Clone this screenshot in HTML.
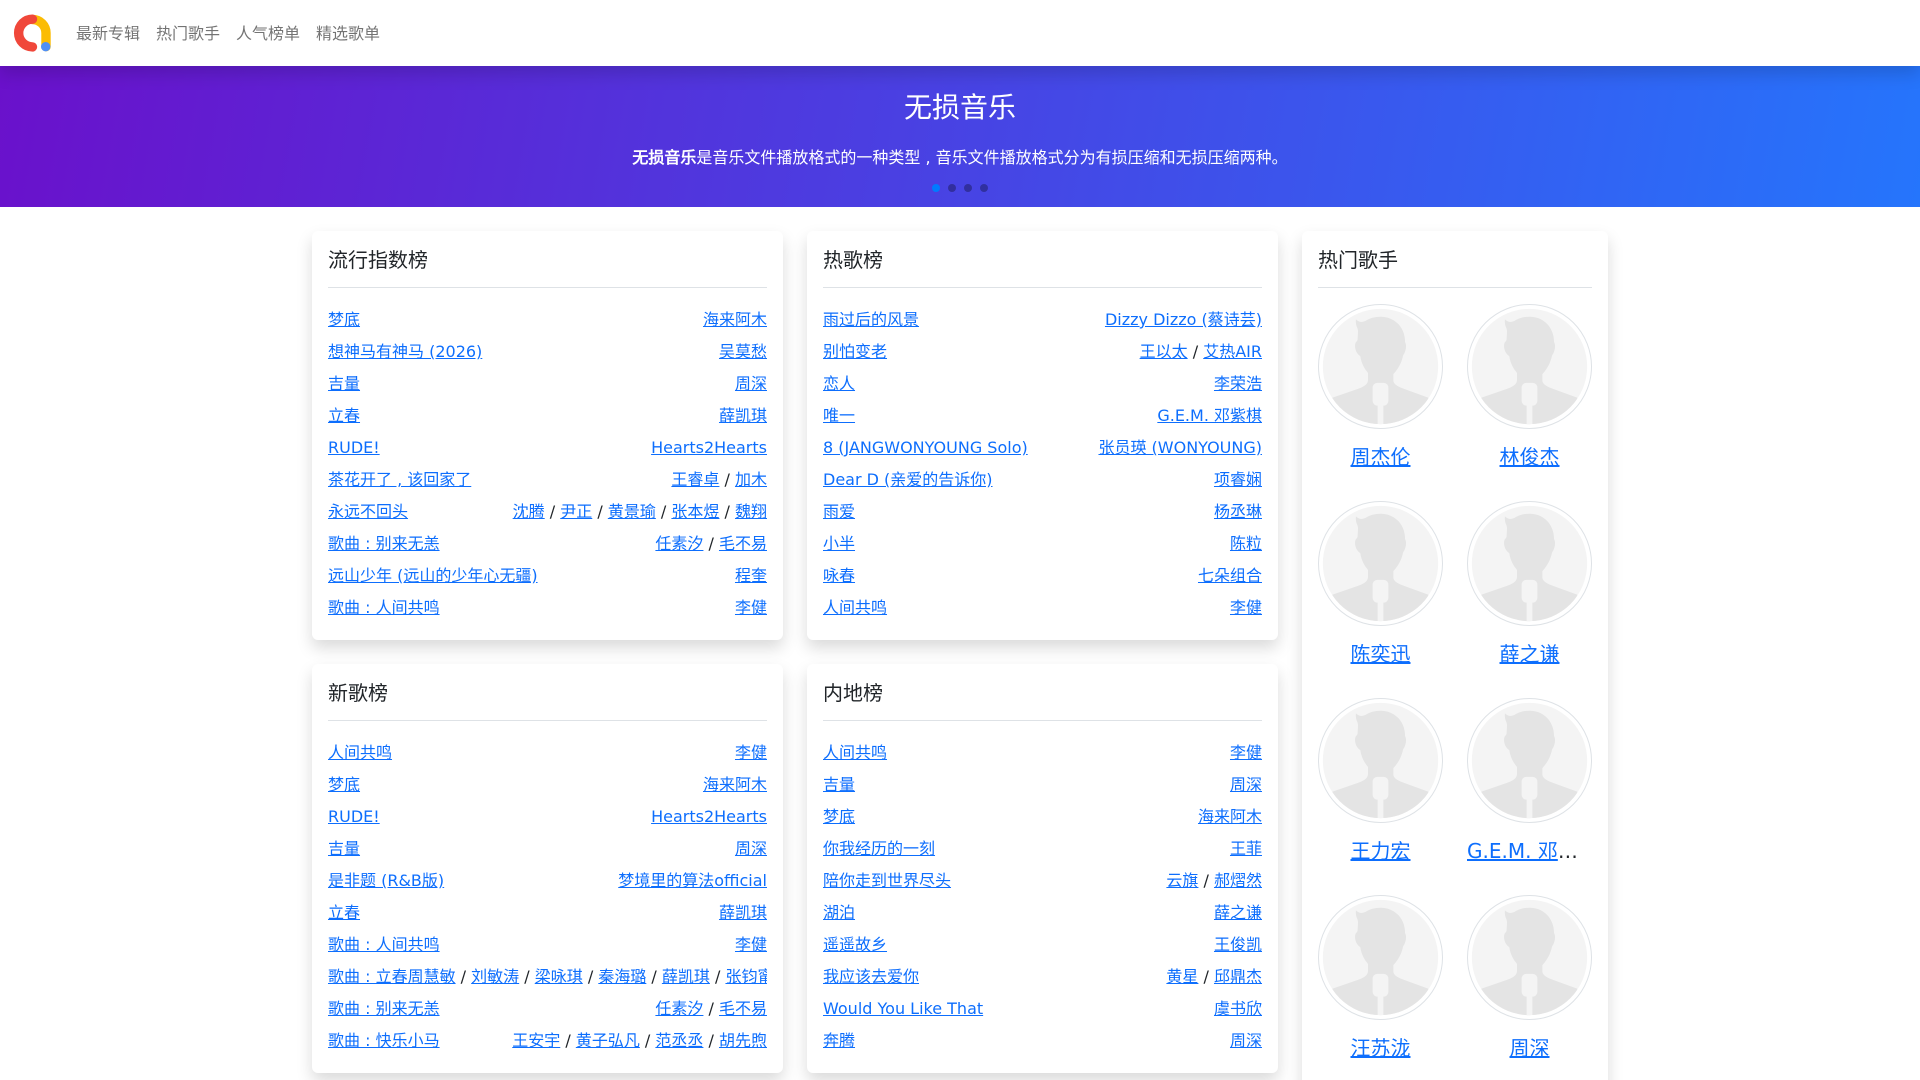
<!DOCTYPE html>
<html lang="zh-CN">
<head>
<meta charset="utf-8">
<title>无损音乐</title>
<style>
*{box-sizing:border-box}
html,body{margin:0;padding:0;height:1080px;overflow:hidden;background:#fff}
body{font-family:"DejaVu Sans","WenQuanYi Zen Hei",sans-serif;font-size:16px;color:#212529;position:relative;width:1920px}
a{color:#0d6efd;text-decoration:underline}
nav{position:absolute;left:0;top:0;width:1920px;height:66px;background:#fff;box-shadow:0 8px 16px rgba(0,0,0,.15);z-index:5}
nav svg{position:absolute;left:0;top:0}
nav span{position:absolute;top:21px;line-height:25px;color:rgba(0,0,0,.55);white-space:nowrap}
.hero{position:absolute;left:0;top:66px;width:1920px;height:141px;background:linear-gradient(100deg,#6a11cb 0%,#2575fc 100%);color:#fff;text-align:center}
.hero h1{position:absolute;left:0;width:100%;top:25px;margin:0;font-size:28px;line-height:34px;font-weight:400}
.hero p{position:absolute;left:0;width:100%;top:80px;margin:0;line-height:24px}
.hero b{font-weight:700}
.dots i{position:absolute;top:118px;width:8px;height:8px;border-radius:4px;background:rgba(0,0,0,.3)}
.card{position:absolute;width:471px;height:409px;background:#fff;border-radius:6px;box-shadow:0 8px 16px rgba(0,0,0,.15);padding:16px}
.card h5{margin:0;font-size:20px;line-height:26px;font-weight:400;height:41px;border-bottom:1px solid #dee2e6}
.list{padding-top:16px}
.r{display:flex;justify-content:space-between;height:32px;line-height:32px;white-space:nowrap;overflow:hidden}
.r>*{flex:none}
.s{position:absolute;width:125px;text-align:center}
.s svg{display:block;width:125px;height:125px}
.s div{margin-top:13px;font-size:20px;line-height:30px;white-space:nowrap;overflow:hidden;text-overflow:ellipsis}
</style>
</head>
<body>
<svg width="0" height="0" style="position:absolute">
<symbol id="av" viewBox="85 252 373 374">
<circle cx="271.5" cy="439" r="185.5" fill="#fff" stroke="#dee2e6" stroke-width="3"/>
<clipPath id="cp"><circle cx="271.5" cy="439" r="172.5"/></clipPath>
<g clip-path="url(#cp)">
<rect x="85" y="252" width="373" height="374" fill="#f4f4f4"/>
<path fill="#e4e4e4" d="M198 298C206 306 214 308 226 303C240 294 254 290 272 290C312 290 345 320 345 366C350 374 349 392 339 406C334 430 324 446 310 462L310 482C312 494 326 500 342 506L414 532L420 640L120 640L128 532L204 506C220 500 232 494 234 482L234 458C222 444 214 428 211 408C198 400 192 380 197 368C200 364 203 362 203 356C204 340 205 332 203 326C198 316 197 306 198 298Z"/>
<rect x="248" y="488" width="47" height="68" rx="14" fill="#f4f4f4"/>
<rect x="263" y="550" width="17" height="80" fill="#f4f4f4"/>
</g>
</symbol>
</svg>

<nav>
<svg width="64" height="66" viewBox="0 0 64 66">
<path d="M32.5 19.5A13.5 13.5 0 0 1 46 33V46.7" fill="none" stroke="#fbbc04" stroke-width="9.4" stroke-linecap="round"/>
<path d="M32.5 19.2A13.8 13.8 0 0 0 32.5 46.9" fill="none" stroke="#f0473a" stroke-width="9.4" stroke-linecap="round"/>
<circle cx="45.7" cy="46.7" r="4.7" fill="#4f8ff7"/>
</svg>
<span style="left:76px">最新专辑</span>
<span style="left:156px">热门歌手</span>
<span style="left:236px">人气榜单</span>
<span style="left:316px">精选歌单</span>
</nav>

<div class="hero">
<h1>无损音乐</h1>
<p><b>无损音乐</b>是音乐文件播放格式的一种类型 , 音乐文件播放格式分为有损压缩和无损压缩两种。</p>
<div class="dots"><i style="left:932px;background:#007bff"></i><i style="left:948px"></i><i style="left:964px"></i><i style="left:980px"></i></div>
</div>

<div class="card" style="left:312px;top:231px">
<h5>流行指数榜</h5>
<div class="list">
<div class="r"><a href="#">梦底</a><span><a href="#">海来阿木</a></span></div>
<div class="r"><a href="#">想神马有神马 (2026)</a><span><a href="#">吴莫愁</a></span></div>
<div class="r"><a href="#">吉量</a><span><a href="#">周深</a></span></div>
<div class="r"><a href="#">立春</a><span><a href="#">薛凯琪</a></span></div>
<div class="r"><a href="#">RUDE!</a><span><a href="#">Hearts2Hearts</a></span></div>
<div class="r"><a href="#">茶花开了 , 该回家了</a><span><a href="#">王睿卓</a> / <a href="#">加木</a></span></div>
<div class="r"><a href="#">永远不回头</a><span><a href="#">沈腾</a> / <a href="#">尹正</a> / <a href="#">黄景瑜</a> / <a href="#">张本煜</a> / <a href="#">魏翔</a></span></div>
<div class="r"><a href="#">歌曲 : 别来无恙</a><span><a href="#">任素汐</a> / <a href="#">毛不易</a></span></div>
<div class="r"><a href="#">远山少年 (远山的少年心无疆)</a><span><a href="#">程奎</a></span></div>
<div class="r"><a href="#">歌曲 : 人间共鸣</a><span><a href="#">李健</a></span></div>
</div>
</div>

<div class="card" style="left:807px;top:231px">
<h5>热歌榜</h5>
<div class="list">
<div class="r"><a href="#">雨过后的风景</a><span><a href="#">Dizzy Dizzo (蔡诗芸)</a></span></div>
<div class="r"><a href="#">别怕变老</a><span><a href="#">王以太</a> / <a href="#">艾热AIR</a></span></div>
<div class="r"><a href="#">恋人</a><span><a href="#">李荣浩</a></span></div>
<div class="r"><a href="#">唯一</a><span><a href="#">G.E.M. 邓紫棋</a></span></div>
<div class="r"><a href="#">8 (JANGWONYOUNG Solo)</a><span><a href="#">张员瑛 (WONYOUNG)</a></span></div>
<div class="r"><a href="#">Dear D (亲爱的告诉你)</a><span><a href="#">项睿娴</a></span></div>
<div class="r"><a href="#">雨爱</a><span><a href="#">杨丞琳</a></span></div>
<div class="r"><a href="#">小半</a><span><a href="#">陈粒</a></span></div>
<div class="r"><a href="#">咏春</a><span><a href="#">七朵组合</a></span></div>
<div class="r"><a href="#">人间共鸣</a><span><a href="#">李健</a></span></div>
</div>
</div>

<div class="card" style="left:312px;top:664px">
<h5>新歌榜</h5>
<div class="list">
<div class="r"><a href="#">人间共鸣</a><span><a href="#">李健</a></span></div>
<div class="r"><a href="#">梦底</a><span><a href="#">海来阿木</a></span></div>
<div class="r"><a href="#">RUDE!</a><span><a href="#">Hearts2Hearts</a></span></div>
<div class="r"><a href="#">吉量</a><span><a href="#">周深</a></span></div>
<div class="r"><a href="#">是非题 (R&amp;B版)</a><span><a href="#">梦境里的算法official</a></span></div>
<div class="r"><a href="#">立春</a><span><a href="#">薛凯琪</a></span></div>
<div class="r"><a href="#">歌曲 : 人间共鸣</a><span><a href="#">李健</a></span></div>
<div class="r"><a href="#">歌曲 : 立春</a><span><a href="#">周慧敏</a> / <a href="#">刘敏涛</a> / <a href="#">梁咏琪</a> / <a href="#">秦海璐</a> / <a href="#">薛凯琪</a> / <a href="#">张钧甯</a></span></div>
<div class="r"><a href="#">歌曲 : 别来无恙</a><span><a href="#">任素汐</a> / <a href="#">毛不易</a></span></div>
<div class="r"><a href="#">歌曲 : 快乐小马</a><span><a href="#">王安宇</a> / <a href="#">黄子弘凡</a> / <a href="#">范丞丞</a> / <a href="#">胡先煦</a></span></div>
</div>
</div>

<div class="card" style="left:807px;top:664px">
<h5>内地榜</h5>
<div class="list">
<div class="r"><a href="#">人间共鸣</a><span><a href="#">李健</a></span></div>
<div class="r"><a href="#">吉量</a><span><a href="#">周深</a></span></div>
<div class="r"><a href="#">梦底</a><span><a href="#">海来阿木</a></span></div>
<div class="r"><a href="#">你我经历的一刻</a><span><a href="#">王菲</a></span></div>
<div class="r"><a href="#">陪你走到世界尽头</a><span><a href="#">云旗</a> / <a href="#">郝熠然</a></span></div>
<div class="r"><a href="#">湖泊</a><span><a href="#">薛之谦</a></span></div>
<div class="r"><a href="#">遥遥故乡</a><span><a href="#">王俊凯</a></span></div>
<div class="r"><a href="#">我应该去爱你</a><span><a href="#">黄星</a> / <a href="#">邱鼎杰</a></span></div>
<div class="r"><a href="#">Would You Like That</a><span><a href="#">虞书欣</a></span></div>
<div class="r"><a href="#">奔腾</a><span><a href="#">周深</a></span></div>
</div>
</div>

<div class="card" style="left:1302px;top:231px;width:306px;height:900px">
<h5>热门歌手</h5>
<div class="s" style="left:16px;top:73px"><svg><use href="#av"/></svg><div><a href="#">周杰伦</a></div></div>
<div class="s" style="left:165px;top:73px"><svg><use href="#av"/></svg><div><a href="#">林俊杰</a></div></div>
<div class="s" style="left:16px;top:270px"><svg><use href="#av"/></svg><div><a href="#">陈奕迅</a></div></div>
<div class="s" style="left:165px;top:270px"><svg><use href="#av"/></svg><div><a href="#">薛之谦</a></div></div>
<div class="s" style="left:16px;top:467px"><svg><use href="#av"/></svg><div><a href="#">王力宏</a></div></div>
<div class="s" style="left:165px;top:467px"><svg><use href="#av"/></svg><div><a href="#">G.E.M. 邓紫棋</a></div></div>
<div class="s" style="left:16px;top:664px"><svg><use href="#av"/></svg><div><a href="#">汪苏泷</a></div></div>
<div class="s" style="left:165px;top:664px"><svg><use href="#av"/></svg><div><a href="#">周深</a></div></div>
</div>
</body>
</html>
